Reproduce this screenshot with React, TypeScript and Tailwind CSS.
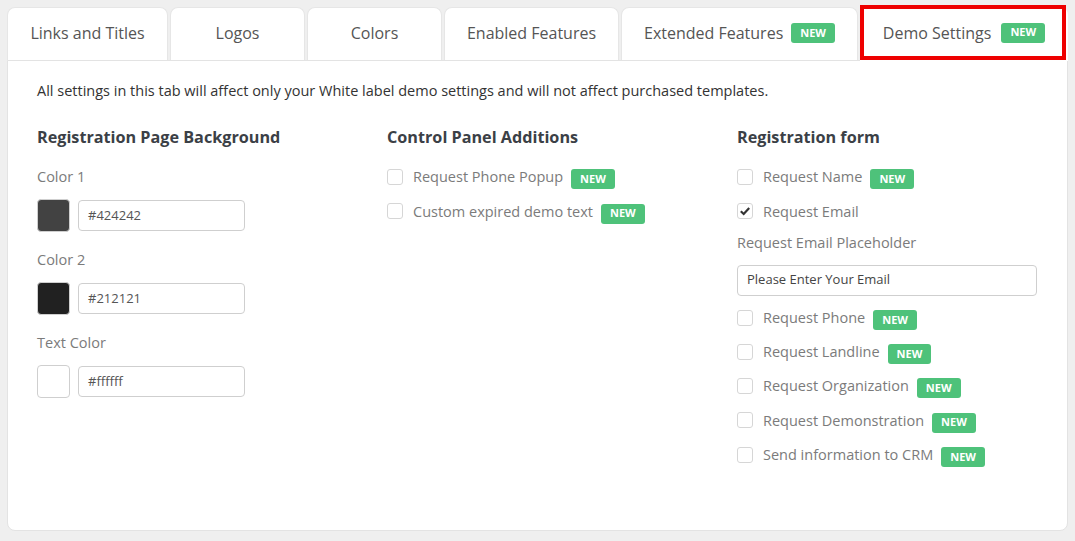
import React from "react";

const tabs = [
  { label: "Links and Titles", w: "w-[161px]" },
  { label: "Logos", w: "w-[135px]" },
  { label: "Colors", w: "w-[135px]" },
  { label: "Enabled Features", w: "w-[175px]" },
  { label: "Extended Features", w: "w-[237px]", isNew: true },
];

const colors = [
  { label: "Color 1", value: "#424242", swatch: "bg-[#424242]" },
  { label: "Color 2", value: "#212121", swatch: "bg-[#212121]" },
  { label: "Text Color", value: "#ffffff", swatch: "bg-white" },
];

function NewBadge() {
  return (
    <span className="inline-flex items-center justify-center rounded-[3px] bg-[#4ec27a] text-white font-bold text-[11px] h-[20px] px-[9px]">
      NEW
    </span>
  );
}

function Check({ label, checked, isNew }: { label: string; checked?: boolean; isNew?: boolean }) {
  return (
    <div className="flex items-center h-[34.25px]">
      <span className="w-[16px] h-[16px] rounded-[3px] border border-[#d6d6d6] bg-white flex items-center justify-center">
        {checked && (
          <svg width="12" height="12" viewBox="0 0 12 12">
            <path d="M1.8 6.2 L4.7 9 L10.2 3" fill="none" stroke="#333" strokeWidth="2.2" />
          </svg>
        )}
      </span>
      <span className="ml-[10px] text-[14.5px] text-[#7b7b7b]">{label}</span>
      {isNew && (
        <span className="ml-[8px]">
          <NewBadge />
        </span>
      )}
    </div>
  );
}

export default function App() {
  return (
    <div className="h-[541px] bg-[#efefef] px-[7px] pt-[7px] font-['Open_Sans',sans-serif]">
      <div className="flex gap-[2px]">
        {tabs.map((t) => (
          <div
            key={t.label}
            className={
              t.w +
              " h-[53px] bg-white rounded-t-[8px] border border-b-0 border-[#e6e6e6] flex items-center justify-center gap-[8px] pb-[2px] text-[16px] text-[#555]"
            }
          >
            {t.label}
            {t.isNew && <NewBadge />}
          </div>
        ))}
        <div className="relative z-10 flex-1 h-[54px] -mb-px bg-white rounded-t-[8px] flex items-center justify-center gap-[10px] pb-[3px] text-[16px] text-[#555]">
          Demo Settings
          <NewBadge />
          <div className="absolute left-0 right-[2px] -top-[2px] bottom-[1px] border-[4px] border-[#ee0000]" />
        </div>
      </div>
      <div className="h-[471px] bg-white border border-[#e3e3e3] rounded-b-[8px] px-[29px] pt-[20px]">
        <p className="text-[14.5px] text-[#333] leading-[20px]">
          All settings in this tab will affect only your White label demo settings and will not affect purchased templates.
        </p>
        <div className="flex mt-[26px]">
          <div className="w-[350px]">
            <h3 className="text-[16.2px] font-bold text-[#3b4046] leading-[20px]">Registration Page Background</h3>
            <div className="mt-[8px]">
              {colors.map((c) => (
                <div key={c.label} className="mb-[6px]">
                  <div className="text-[14.5px] text-[#7b7b7b] h-[44px] flex items-center">{c.label}</div>
                  <div className="flex items-center gap-[8px]">
                    <span className={"w-[33px] h-[33px] rounded-[4px] border border-[#cfcfcf] " + c.swatch} />
                    <div className="w-[167px] h-[31px] rounded-[4px] border border-[#cfcfcf] px-[9px] flex items-center text-[13px] text-[#555]">
                      {c.value}
                    </div>
                  </div>
                </div>
              ))}
            </div>
          </div>
          <div className="w-[350px]">
            <h3 className="text-[16.2px] font-bold text-[#3b4046] leading-[20px]">Control Panel Additions</h3>
            <div className="mt-[13px]">
              <Check label="Request Phone Popup" isNew />
              <Check label="Custom expired demo text" isNew />
            </div>
          </div>
          <div className="flex-1">
            <h3 className="text-[16.2px] font-bold text-[#3b4046] leading-[20px]">Registration form</h3>
            <div className="mt-[13px]">
              <Check label="Request Name" isNew />
              <Check label="Request Email" checked />
              <div className="text-[14.5px] text-[#7b7b7b] h-[28px] flex items-center">Request Email Placeholder</div>
              <div className="mt-[8px] w-[300px] h-[31px] rounded-[4px] border border-[#cfcfcf] px-[9px] flex items-center text-[13px] text-[#444]">
                Please Enter Your Email
              </div>
              <div className="mt-[5px]">
                <Check label="Request Phone" isNew />
                <Check label="Request Landline" isNew />
                <Check label="Request Organization" isNew />
                <Check label="Request Demonstration" isNew />
                <Check label="Send information to CRM" isNew />
              </div>
            </div>
          </div>
        </div>
      </div>
    </div>
  );
}
